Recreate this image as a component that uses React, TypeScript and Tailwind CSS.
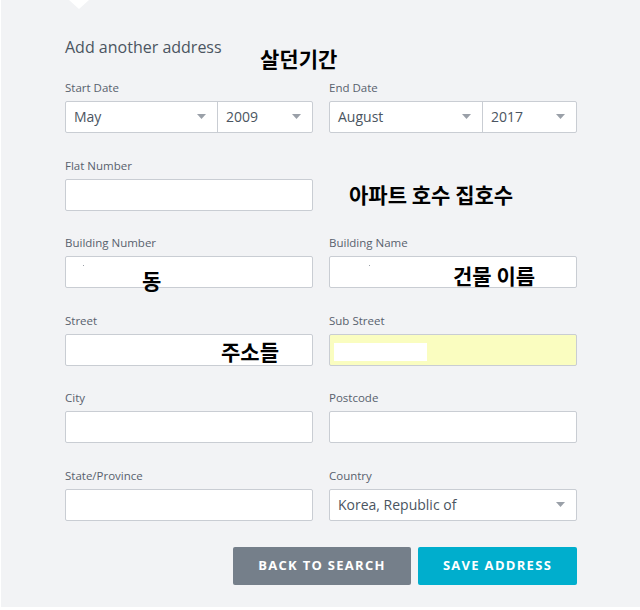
import { ReactNode } from "react";

const font = { fontFamily: '"Open Sans", "Noto Sans", sans-serif' };

function Caret() {
  return (
    <svg width="9" height="5" viewBox="0 0 9 5" className="shrink-0">
      <path d="M0 0h9L4.5 5z" fill="#9aa0a8" />
    </svg>
  );
}

function Field({ label, children }: { label: string; children: ReactNode }) {
  return (
    <div className="flex flex-col">
      <div className="text-[11.5px] leading-4 text-[#58616d] mb-[5px]">{label}</div>
      {children}
    </div>
  );
}

function Input({ yellow = false, children }: { yellow?: boolean; children?: ReactNode }) {
  return (
    <div
      className={
        "h-8 rounded-[2px] border border-[#c9cdd3] relative " +
        (yellow ? "bg-[#fafdc0]" : "bg-white")
      }
    >
      {children}
    </div>
  );
}

function Select({ value, className = "" }: { value: string; className?: string }) {
  return (
    <div className={"h-full flex items-center justify-between pl-2 pr-[11px] pb-px text-[14px] text-[#4b5561] " + className}>
      <span>{value}</span>
      <Caret />
    </div>
  );
}

function Note({ children, className }: { children: ReactNode; className: string }) {
  return (
    <div
      className={"absolute text-[21px] font-bold text-black leading-none whitespace-nowrap " + className}
      style={{ fontFamily: '"Noto Sans CJK KR", sans-serif' }}
    >
      {children}
    </div>
  );
}

export default function App() {
  return (
    <div className="w-[640px] h-[610px] bg-white" style={font}>
      <div className="ml-px h-[607px] bg-[#f2f3f5] relative px-16 pt-[37px]">
        <div className="absolute left-[68px] top-0 w-0 h-0 border-l-[10px] border-r-[10px] border-t-[9px] border-l-transparent border-r-transparent border-t-white" />

        <h2 className="text-[16px] leading-5 text-[#4b5561] w-[512px]">Add another address</h2>

        <div className="grid grid-cols-2 gap-x-4 gap-y-[24.6px] mt-[23px] w-[512px]">
          <Field label="Start Date">
            <div className="flex h-8 rounded-[2px] border border-[#c9cdd3] bg-white">
              <Select value="May" className="flex-1 border-r border-[#c9cdd3]" />
              <Select value="2009" className="w-[94px]" />
            </div>
          </Field>
          <Field label="End Date">
            <div className="flex h-8 rounded-[2px] border border-[#c9cdd3] bg-white">
              <Select value="August" className="flex-1 border-r border-[#c9cdd3]" />
              <Select value="2017" className="w-[93px]" />
            </div>
          </Field>

          <Field label="Flat Number">
            <Input />
          </Field>
          <div />

          <Field label="Building Number">
            <Input>
              <span className="absolute left-[17px] top-[8px] w-px h-px bg-[#9aa0a8]" />
            </Input>
          </Field>
          <Field label="Building Name">
            <Input>
              <span className="absolute left-[39px] top-[8px] w-px h-px bg-[#9aa0a8]" />
            </Input>
          </Field>

          <Field label="Street">
            <Input />
          </Field>
          <Field label="Sub Street">
            <Input yellow>
              <span className="absolute left-[4px] top-[8px] w-[93px] h-[18px] bg-white" />
            </Input>
          </Field>

          <Field label="City">
            <Input />
          </Field>
          <Field label="Postcode">
            <Input />
          </Field>

          <Field label="State/Province">
            <Input />
          </Field>
          <Field label="Country">
            <Input>
              <Select value="Korea, Republic of" />
            </Input>
          </Field>
        </div>

        <div className="flex justify-end gap-[7px] mt-[26px] w-[512px]">
          <button className="w-[178px] h-[38px] rounded-[2px] bg-[#757f8a] text-white text-[13px] font-bold tracking-[1.3px]">
            BACK TO SEARCH
          </button>
          <button className="w-[159px] h-[38px] rounded-[2px] bg-[#00aecd] text-white text-[13px] font-bold tracking-[1.3px]">
            SAVE ADDRESS
          </button>
        </div>

        <Note className="left-[259px] top-[48px]">살던기간</Note>
        <Note className="left-[348px] top-[184px]">아파트 호수 집호수</Note>
        <Note className="left-[141px] top-[270px]">동</Note>
        <Note className="left-[452px] top-[265px]">건물 이름</Note>
        <Note className="left-[220px] top-[341px]">주소들</Note>
      </div>
    </div>
  );
}
